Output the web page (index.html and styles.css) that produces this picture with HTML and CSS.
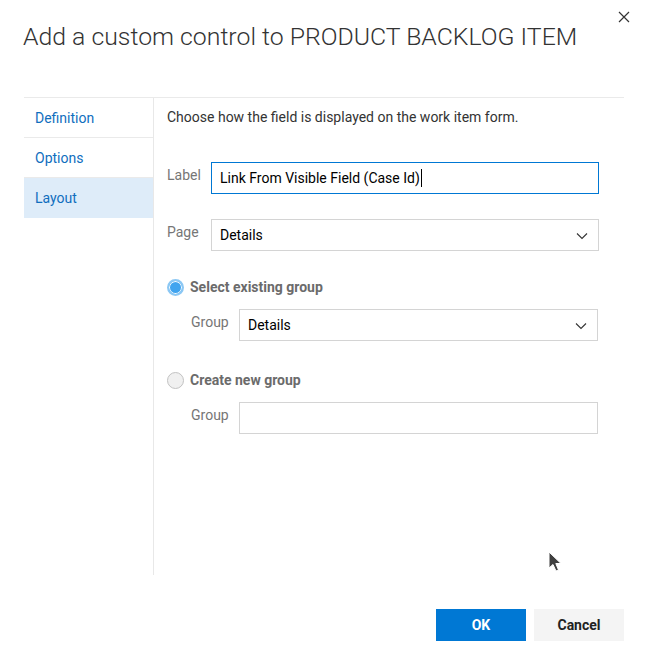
FILE: index.html
```html
<!DOCTYPE html>
<html>
<head>
<meta charset="utf-8">
<link rel="stylesheet" href="styles.css">
</head>
<body>
<div class="dialog">
  <div class="header">
    <h1 class="title">Add a custom control to PRODUCT BACKLOG ITEM</h1>
    <button class="close" aria-label="Close">
      <svg width="12" height="12" viewBox="0 0 12 12"><path d="M1 1L11 11M11 1L1 11" stroke="#333" stroke-width="1.2" fill="none"/></svg>
    </button>
  </div>
  <div class="body">
    <nav class="nav">
      <div class="nav-item">Definition</div>
      <div class="nav-item">Options</div>
      <div class="nav-item selected">Layout</div>
    </nav>
    <div class="content">
      <p class="intro">Choose how the field is displayed on the work item form.</p>
      <div class="row">
        <span class="label">Label</span>
        <div class="field focused">Link From Visible Field (Case Id)<span class="caret"></span></div>
      </div>
      <div class="row">
        <span class="label">Page</span>
        <div class="field select">Details
          <svg class="chev" width="12" height="8" viewBox="0 0 12 8"><path d="M1 1.5L6 6.5L11 1.5" stroke="#333" stroke-width="1.1" fill="none"/></svg>
        </div>
      </div>
      <div class="radio-row">
        <span class="radio on"></span><span class="radio-label">Select existing group</span>
      </div>
      <div class="row sub">
        <span class="label">Group</span>
        <div class="field select">Details
          <svg class="chev" width="12" height="8" viewBox="0 0 12 8"><path d="M1 1.5L6 6.5L11 1.5" stroke="#333" stroke-width="1.1" fill="none"/></svg>
        </div>
      </div>
      <div class="radio-row second">
        <span class="radio"></span><span class="radio-label">Create new group</span>
      </div>
      <div class="row sub">
        <span class="label">Group</span>
        <div class="field"></div>
      </div>
    </div>
  </div>
  <div class="footer">
    <button class="btn primary">OK</button>
    <button class="btn">Cancel</button>
  </div>
</div>
<svg class="cursor" width="14" height="22" viewBox="0 0 14 22"><path d="M1 1L1 17L5 13.5L8 20L10.5 19L7.8 12.5L13 12.5Z" fill="#3f3f3f" stroke="#fff" stroke-width="1"/></svg>
</body>
</html>
```
FILE: styles.css
```css
* { box-sizing: border-box; }
body {
  margin: 0;
  background: #fff;
  font-family: Roboto, "Noto Sans", Arial, sans-serif;
  font-size: 14px;
  color: #333;
}
.dialog {
  width: 649px;
  height: 666px;
  padding: 0 25px 0 24px;
  display: flex;
  flex-direction: column;
}
.header {
  position: relative;
  height: 97px;
}
.title {
  margin: 0;
  padding-top: 21px;
  margin-left: -1px;
  font-weight: 300;
  font-size: 24.8px;
  line-height: 32px;
  color: #333;
}
.close {
  position: absolute;
  top: 10px;
  right: -7px;
  width: 14px;
  height: 14px;
  padding: 0;
  border: 0;
  background: none;
  display: flex;
  align-items: center;
  justify-content: center;
}
.body {
  display: flex;
  height: 478px;
  border-top: 1px solid #eaeaea;
}
.nav {
  width: 130px;
  border-right: 1px solid #e8e8e8;
  flex-shrink: 0;
}
.nav-item {
  height: 40px;
  line-height: 41px;
  padding-left: 11px;
  color: #106ebe;
  border-bottom: 1px solid #eaeaea;
}
.nav-item.selected {
  background: #deecf9;
  border-bottom: 0;
  height: 40px;
  line-height: 40px;
}
.content {
  flex: 1;
  padding: 9px 25px 0 13px;
}
.intro {
  margin: 0;
  line-height: 20px;
  color: #333;
}
.row {
  display: flex;
  align-items: flex-start;
  margin-top: 35px;
}
.row + .row { margin-top: 25px; }
.label {
  width: 44px;
  flex-shrink: 0;
  color: #767676;
  line-height: 26px;
}
.field {
  flex: 1;
  height: 32px;
  border: 1px solid #d4d4d4;
  line-height: 30px;
  padding-left: 8px;
  color: #000;
  position: relative;
}
.field.focused { border-color: #0078d4; }
.caret {
  display: inline-block;
  width: 1px;
  height: 18px;
  background: #000;
  vertical-align: -4px;
  margin-left: 1px;
}
.chev {
  position: absolute;
  right: 10px;
  top: 12px;
}
.radio-row {
  display: flex;
  align-items: center;
  margin-top: 26px;
  height: 20px;
}
.radio-row.second { margin-top: 29px; }
.radio {
  width: 17px;
  height: 17px;
  border-radius: 50%;
  border: 1px solid #c2c2c2;
  background: #f0f0f0;
  margin-right: 6px;
}
.radio.on {
  border: 2px solid #8cc8f4;
  background: #40a4ef;
  box-shadow: inset 0 0 0 1px #fff;
}
.radio-label {
  font-weight: 700;
  color: #6b6b6b;
}
.row.sub {
  margin-top: 12px;
  padding-left: 24px;
}
.row.sub .label { width: 48px; }
.row.sub .field { margin-right: 1px; }
.footer {
  display: flex;
  justify-content: flex-end;
  gap: 8px;
  margin-top: 34px;
}
.btn {
  width: 90px;
  height: 32px;
  border: 0;
  font-family: Roboto, "Noto Sans", Arial, sans-serif;
  font-size: 14px;
  font-weight: 700;
  background: #f4f4f4;
  color: #222;
}
.btn.primary {
  background: #0078d4;
  color: #fff;
}
.cursor {
  position: absolute;
  left: 548px;
  top: 551px;
}
```
